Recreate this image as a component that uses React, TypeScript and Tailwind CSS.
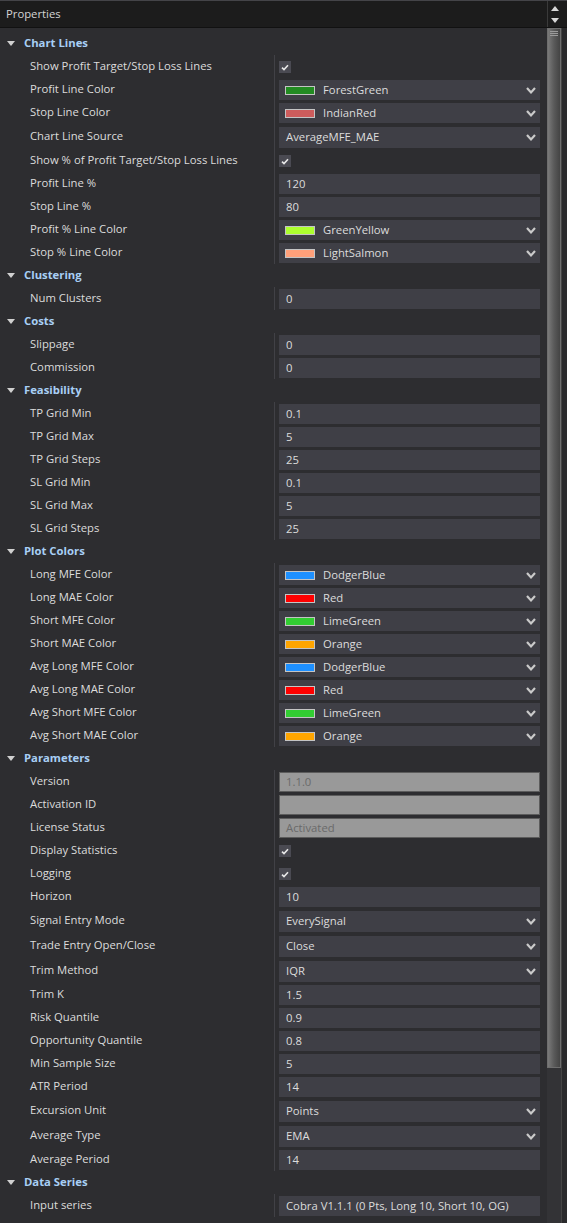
type Row =
  | { kind: "check"; label: string }
  | { kind: "text"; label: string; value: string }
  | { kind: "enum"; label: string; value: string }
  | { kind: "color"; label: string; value: string; swatch: string }
  | { kind: "disabled"; label: string; value: string };

type Group = { title: string; rows: Row[] };

const groups: Group[] = [
  {
    title: "Chart Lines",
    rows: [
      { kind: "check", label: "Show Profit Target/Stop Loss Lines" },
      { kind: "color", label: "Profit Line Color", value: "ForestGreen", swatch: "#228b22" },
      { kind: "color", label: "Stop Line Color", value: "IndianRed", swatch: "#cd5c5c" },
      { kind: "enum", label: "Chart Line Source", value: "AverageMFE_MAE" },
      { kind: "check", label: "Show % of Profit Target/Stop Loss Lines" },
      { kind: "text", label: "Profit Line %", value: "120" },
      { kind: "text", label: "Stop Line %", value: "80" },
      { kind: "color", label: "Profit % Line Color", value: "GreenYellow", swatch: "#adff2f" },
      { kind: "color", label: "Stop % Line Color", value: "LightSalmon", swatch: "#ffa07a" },
    ],
  },
  { title: "Clustering", rows: [{ kind: "text", label: "Num Clusters", value: "0" }] },
  {
    title: "Costs",
    rows: [
      { kind: "text", label: "Slippage", value: "0" },
      { kind: "text", label: "Commission", value: "0" },
    ],
  },
  {
    title: "Feasibility",
    rows: [
      { kind: "text", label: "TP Grid Min", value: "0.1" },
      { kind: "text", label: "TP Grid Max", value: "5" },
      { kind: "text", label: "TP Grid Steps", value: "25" },
      { kind: "text", label: "SL Grid Min", value: "0.1" },
      { kind: "text", label: "SL Grid Max", value: "5" },
      { kind: "text", label: "SL Grid Steps", value: "25" },
    ],
  },
  {
    title: "Plot Colors",
    rows: [
      { kind: "color", label: "Long MFE Color", value: "DodgerBlue", swatch: "#1e90ff" },
      { kind: "color", label: "Long MAE Color", value: "Red", swatch: "#ff0000" },
      { kind: "color", label: "Short MFE Color", value: "LimeGreen", swatch: "#32cd32" },
      { kind: "color", label: "Short MAE Color", value: "Orange", swatch: "#ffa500" },
      { kind: "color", label: "Avg Long MFE Color", value: "DodgerBlue", swatch: "#1e90ff" },
      { kind: "color", label: "Avg Long MAE Color", value: "Red", swatch: "#ff0000" },
      { kind: "color", label: "Avg Short MFE Color", value: "LimeGreen", swatch: "#32cd32" },
      { kind: "color", label: "Avg Short MAE Color", value: "Orange", swatch: "#ffa500" },
    ],
  },
  {
    title: "Parameters",
    rows: [
      { kind: "disabled", label: "Version", value: "1.1.0" },
      { kind: "disabled", label: "Activation ID", value: "" },
      { kind: "disabled", label: "License Status", value: "Activated" },
      { kind: "check", label: "Display Statistics" },
      { kind: "check", label: "Logging" },
      { kind: "text", label: "Horizon", value: "10" },
      { kind: "enum", label: "Signal Entry Mode", value: "EverySignal" },
      { kind: "enum", label: "Trade Entry Open/Close", value: "Close" },
      { kind: "enum", label: "Trim Method", value: "IQR" },
      { kind: "text", label: "Trim K", value: "1.5" },
      { kind: "text", label: "Risk Quantile", value: "0.9" },
      { kind: "text", label: "Opportunity Quantile", value: "0.8" },
      { kind: "text", label: "Min Sample Size", value: "5" },
      { kind: "text", label: "ATR Period", value: "14" },
      { kind: "enum", label: "Excursion Unit", value: "Points" },
      { kind: "enum", label: "Average Type", value: "EMA" },
      { kind: "text", label: "Average Period", value: "14" },
    ],
  },
  {
    title: "Data Series",
    rows: [{ kind: "text", label: "Input series", value: "Cobra V1.1.1 (0 Pts, Long 10, Short 10, OG)" }],
  },
];

function Chevron() {
  return (
    <svg width="10" height="7" viewBox="0 0 10 7" className="ml-auto mr-[4px] shrink-0">
      <path d="M1 1 L5 5.4 L9 1" fill="none" stroke="#cacaca" strokeWidth="2.2" />
    </svg>
  );
}

function Value({ row }: { row: Row }) {
  if (row.kind === "check") {
    return (
      <div className="mt-[6px] flex h-[12px] w-[12px] items-center justify-center bg-[#4a4a52]">
        <svg width="8" height="7" viewBox="0 0 8 7">
          <path d="M1 3.6 L3 5.6 L7 1.2" fill="none" stroke="#e8e8e8" strokeWidth="1.6" />
        </svg>
      </div>
    );
  }
  if (row.kind === "disabled") {
    return (
      <div className="mt-[2px] flex h-[20px] w-[261px] items-center border border-[#5c5c5c] bg-[#999999] pl-[6px] text-[#6a6a6a]">
        {row.value}
      </div>
    );
  }
  if (row.kind === "enum") {
    return (
      <div className="mt-[3px] flex h-[21px] w-[261px] items-center bg-[#3f3f46] pl-[7px] text-[#dcdcdc]">
        <span>{row.value}</span>
        <Chevron />
      </div>
    );
  }
  if (row.kind === "color") {
    return (
      <div className="mt-[2px] flex h-[20px] w-[261px] items-center bg-[#3f3f46] pl-[6px] text-[#dcdcdc]">
        <span className="mr-[8px] h-[9px] w-[30px] shrink-0 border border-[#c4c4c4]" style={{ backgroundColor: row.swatch }} />
        <span>{row.value}</span>
        <Chevron />
      </div>
    );
  }
  return (
    <div className="mt-[2px] flex h-[20px] w-[261px] items-center bg-[#3f3f46] pl-[7px] text-[#dcdcdc]">
      {row.value}
    </div>
  );
}

function Section({ group }: { group: Group }) {
  return (
    <div>
      <div className="flex h-[23px] items-center">
        <svg width="8" height="5" viewBox="0 0 8 5" className="ml-[7px] mr-[9px]">
          <path d="M0 0 L8 0 L4 5 Z" fill="#d0d0d0" />
        </svg>
        <span className="font-bold text-[#a8cff5]">{group.title}</span>
      </div>
      <div>
        {group.rows.map((row, i) => (
          <div key={i} className={`flex ${row.kind === "enum" ? "h-[25px]" : "h-[23px]"}`}>
            <div className="flex w-[274px] shrink-0 items-center pl-[30px] text-[#dcdcdc]">{row.label}</div>
            <div className="w-px shrink-0 bg-[#414146]" />
            <div className="pl-[4px]">
              <Value row={row} />
            </div>
          </div>
        ))}
      </div>
    </div>
  );
}

export default function App() {
  return (
    <div
      className="flex h-[1223px] w-[567px] flex-col overflow-hidden bg-[#2d2d30] text-[11.3px]"
      style={{ fontFamily: '"Open Sans", "Noto Sans", sans-serif' }}
    >
      <div className="flex h-[27px] shrink-0 border-t border-[#444448] bg-[#1c1c1c]">
        <div className="flex flex-1 items-center pl-[6px] text-[#d4d4d4]">Properties</div>
        <div className="flex w-[14px] flex-col items-center justify-center gap-[7px] border-l border-[#3a3a3a] mr-[6px]">
          <svg width="8" height="5" viewBox="0 0 8 5">
            <path d="M0 5 L8 5 L4 0 Z" fill="#d8d8d8" />
          </svg>
          <svg width="8" height="5" viewBox="0 0 8 5">
            <path d="M0 0 L8 0 L4 5 Z" fill="#d8d8d8" />
          </svg>
        </div>
      </div>
      <div className="flex flex-1 border-t border-[#111]">
        <div className="w-[547px] shrink-0 pt-[4px]">
          {groups.map((g) => (
            <Section key={g.title} group={g} />
          ))}
        </div>
        <div className="flex w-[14px] shrink-0 flex-col bg-[#333336]">
          <div className="relative h-[1040px] border border-[#6e6e6e] bg-gradient-to-r from-[#7a7a7a] via-[#5a5a5a] to-[#444]">
            <div className="mx-auto mt-[2px] flex w-[8px] flex-col gap-[1px]">
              <div className="h-px bg-[#9a9a9a]" />
              <div className="h-px bg-[#9a9a9a]" />
              <div className="h-px bg-[#9a9a9a]" />
            </div>
          </div>
        </div>
        <div className="w-[6px] shrink-0 border-l border-[#444] bg-[#2a2a2c]" />
      </div>
    </div>
  );
}
